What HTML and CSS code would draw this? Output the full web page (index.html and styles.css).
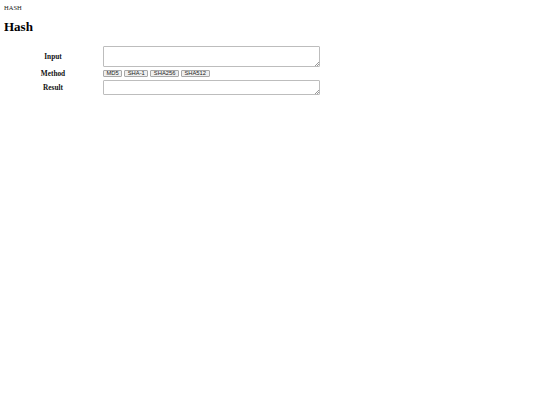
FILE: index.html
```html
<!DOCTYPE html>
<html>
<head>
<meta charset="utf-8">
<link rel="stylesheet" href="styles.css">
</head>
<body>
<div class="crumb">HASH</div>
<h1 class="title">Hash</h1>
<table class="form">
<tr><th class="label">Input</th><td class="cell"><div class="field-wrap"><textarea class="field field-in"></textarea></div></td></tr>
<tr><th class="label">Method</th><td class="cell"><div class="methods"><button class="btn">MD5</button><button class="btn">SHA-1</button><button class="btn">SHA256</button><button class="btn">SHA512</button></div></td></tr>
<tr><th class="label">Result</th><td class="cell"><div class="field-wrap"><textarea class="field field-out"></textarea></div></td></tr>
</table>
</body>
</html>
```
FILE: styles.css
```css
body { margin: 4px; font-family: "Liberation Serif", serif; font-size: 8px; color: #000; background: #fff; }
.crumb { font-size: 6.5px; line-height: 7px; color: #222; }
.title { font-size: 13px; line-height: 15px; margin: 8px 0 10px; font-weight: bold; }
.form { border-spacing: 1px; border-collapse: separate; }
.label { width: 94px; padding: 1px; font-size: 7.3px; line-height: 7px; font-weight: bold; text-align: center; vertical-align: middle; color: #111; }
.cell { padding: 1px; vertical-align: middle; }
.field-wrap { position: relative; width: 217px; }
.field-wrap::after { content: ""; position: absolute; right: 1px; bottom: 1px; width: 4px; height: 4px; background: linear-gradient(135deg, transparent 45%, #999 45%, #999 55%, transparent 55%, transparent 72%, #999 72%, #999 82%, transparent 82%); }
.field { display: block; width: 217px; box-sizing: border-box; margin: 0; padding: 1px; border: 1px solid #bdbdbd; border-radius: 1px; background: #fff; resize: none; font-size: 6px; }
.field-in { height: 21px; }
.field-out { height: 15px; }
.methods { display: flex; gap: 2px; align-items: center; height: 7px; }
.btn { font-family: "Liberation Sans", Arial, sans-serif; font-size: 5.8px; line-height: 5px; height: 7px; padding: 0 2.5px; margin: 0; border: 1px solid #a8a8a8; border-radius: 1px; background: #efefef; color: #222; }
```
